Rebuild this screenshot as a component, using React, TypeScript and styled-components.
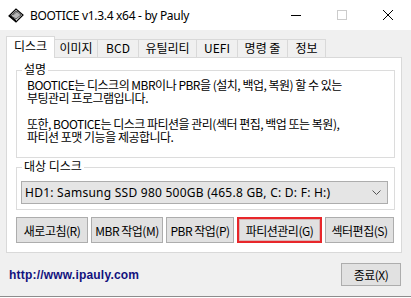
import React from "react";
import styled, { createGlobalStyle } from "styled-components";

const Global = createGlobalStyle`
  html, body { margin: 0; padding: 0; background: #ffffff; }
  body { font-family: "Noto Sans CJK KR", "Noto Sans", sans-serif; color: #000; }
  * { box-sizing: border-box; }
`;

const Window = styled.div`
  width: 411px;
  height: 297px;
  display: flex;
  flex-direction: column;
  background: #f0f0f0;
  border-bottom: 1px solid #8c8c8c;
`;

const TitleBar = styled.div`
  height: 30px;
  flex: 0 0 30px;
  background: #ffffff;
  display: flex;
  align-items: center;
  padding-left: 8px;
`;

const TitleText = styled.div`
  margin-left: 6px;
  font-family: "Noto Sans", "Noto Sans CJK KR", sans-serif;
  font-size: 12px;
  color: #000;
  flex: 1;
  letter-spacing: -0.3px;
`;

const CtrlButton = styled.div`
  width: 46px;
  height: 30px;
  display: flex;
  align-items: center;
  justify-content: center;
`;

const Body = styled.div`
  flex: 1;
  display: flex;
  flex-direction: column;
  padding: 6px 9px 0 6px;
`;

const TabRow = styled.div`
  display: flex;
  align-items: flex-end;
  height: 22px;
  margin-bottom: -1px;
  position: relative;
  z-index: 1;
`;

const Tab = styled.div<{ $w: number; $active?: boolean }>`
  width: ${(p) => p.$w}px;
  height: ${(p) => (p.$active ? 22 : 18)}px;
  margin-bottom: ${(p) => (p.$active ? 0 : 1)}px;
  margin-left: -1px;
  &:first-child { margin-left: 0; }
  border: 1px solid #d9d9d9;
  border-bottom: none;
  background: ${(p) => (p.$active ? "#ffffff" : "#f0f0f0")};
  font-size: 12px;
  line-height: ${(p) => (p.$active ? 18 : 16)}px;
  text-align: center;
  color: #000;
  white-space: nowrap;
  position: relative;
  z-index: ${(p) => (p.$active ? 2 : 1)};
`;

const Panel = styled.div`
  height: 196px;
  border: 1px solid #d9d9d9;
  background: #ffffff;
  padding: 4px 6px 0 9px;
  display: flex;
  flex-direction: column;
`;

const Group = styled.fieldset<{ $h: number; $mt?: number }>`
  margin: ${(p) => p.$mt ?? 0}px 0 0 0;
  padding: 0;
  height: ${(p) => p.$h}px;
  border: 1px solid #dcdcdc;
  min-width: 0;
`;

const Legend = styled.legend`
  margin-left: 5px;
  padding: 0 2px 3px 2px;
  font-size: 12px;
  line-height: 13px;
  color: #000;
`;

const Desc = styled.div`
  padding: 0 10px;
  font-size: 12px;
  line-height: 13px;
  white-space: pre-line;
  letter-spacing: -0.5px;
`;

const Combo = styled.div`
  margin: 6px 6px 0 4px;
  height: 23px;
  border: 1px solid #adadad;
  background: #e5e5e5;
  display: flex;
  align-items: center;
  padding: 0 0 0 3px;
  font-family: "Noto Sans", "Noto Sans CJK KR", sans-serif;
  font-size: 12px;
  color: #000;
`;

const ComboText = styled.div`
  flex: 1;
  white-space: nowrap;
  letter-spacing: 0.25px;
`;

const Chevron = styled.div`
  width: 22px;
  display: flex;
  align-items: center;
  justify-content: center;
`;

const ButtonRow = styled.div`
  display: flex;
  gap: 3px;
  margin-top: 7px;
`;

const Button = styled.div<{ $w: number; $focus?: boolean }>`
  width: ${(p) => p.$w}px;
  height: 26px;
  border: ${(p) => (p.$focus ? "2px solid #e8262a" : "1px solid #adadad")};
  background: #e1e1e1;
  box-shadow: ${(p) => (p.$focus ? "inset 0 0 0 1px #d8b4b4" : "none")};
  display: flex;
  align-items: center;
  justify-content: center;
  font-size: 12px;
  color: #000;
  white-space: nowrap;
  letter-spacing: -0.5px;
`;

const Footer = styled.div`
  flex: 1;
  display: flex;
  align-items: center;
  justify-content: space-between;
  padding: 0 1px 0 3px;
`;

const Link = styled.a`
  font-family: "Liberation Sans", Arial, sans-serif;
  font-weight: bold;
  font-size: 12px;
  letter-spacing: 0.2px;
  color: #12127e;
  text-decoration: none;
`;

const CloseButton = styled(Button)`
  height: 23px;
`;

const AppIcon = () => (
  <svg width="16" height="16" viewBox="0 0 16 16">
    <polygon points="1,9 8,2 15,8 8,15" fill="#e8e8e8" stroke="#000" strokeWidth="1.2" />
    <polygon points="3,9 8,4 13,8 8,12" fill="#b8b8b8" stroke="#333" strokeWidth="0.8" />
    <polygon points="1,9 8,15 8,13 2,8" fill="#000" />
    <line x1="5" y1="8" x2="10" y2="4" stroke="#555" strokeWidth="0.8" />
  </svg>
);

const tabs: { label: string; w: number; active?: boolean }[] = [
  { label: "디스크", w: 49, active: true },
  { label: "이미지", w: 44 },
  { label: "BCD", w: 42 },
  { label: "유틸리티", w: 59 },
  { label: "UEFI", w: 42 },
  { label: "명령 줄", w: 51 },
  { label: "정보", w: 39 },
];

export default function App() {
  return (
    <>
      <Global />
      <Window>
        <TitleBar>
          <AppIcon />
          <TitleText>BOOTICE v1.3.4 x64 - by Pauly</TitleText>
          <CtrlButton>
            <svg width="10" height="10" viewBox="0 0 10 10">
              <line x1="0" y1="5.5" x2="10" y2="5.5" stroke="#000" strokeWidth="1" />
            </svg>
          </CtrlButton>
          <CtrlButton>
            <svg width="10" height="10" viewBox="0 0 10 10">
              <rect x="0.5" y="0.5" width="9" height="9" fill="none" stroke="#cccccc" strokeWidth="1" />
            </svg>
          </CtrlButton>
          <CtrlButton>
            <svg width="10" height="10" viewBox="0 0 10 10">
              <path d="M0 0 L10 10 M10 0 L0 10" stroke="#000" strokeWidth="1" />
            </svg>
          </CtrlButton>
        </TitleBar>
        <Body>
          <TabRow>
            {tabs.map((t) => (
              <Tab key={t.label} $w={t.w} $active={t.active}>
                {t.label}
              </Tab>
            ))}
          </TabRow>
          <Panel>
            <Group $h={96}>
              <Legend>설명</Legend>
              <Desc>
                {"BOOTICE는 디스크의 MBR이나 PBR을 (설치, 백업, 복원) 할 수 있는\n부팅관리 프로그램입니다.\n\n또한, BOOTICE는 디스크 파티션을 관리(섹터 편집, 백업 또는 복원),\n파티션 포맷 기능을 제공합니다."}
              </Desc>
            </Group>
            <Group $h={51} $mt={1}>
              <Legend>대상 디스크</Legend>
              <Combo>
                <ComboText>HD1: Samsung SSD 980 500GB (465.8 GB, C: D: F: H:)</ComboText>
                <Chevron>
                  <svg width="9" height="5" viewBox="0 0 9 5">
                    <path d="M0.5 0.5 L4.5 4.5 L8.5 0.5" fill="none" stroke="#555" strokeWidth="1" />
                  </svg>
                </Chevron>
              </Combo>
            </Group>
            <ButtonRow>
              <Button $w={72}>새로고침(R)</Button>
              <Button $w={72}>MBR 작업(M)</Button>
              <Button $w={68}>PBR 작업(P)</Button>
              <Button $w={85} $focus>파티션관리(G)</Button>
              <Button $w={69}>섹터편집(S)</Button>
            </ButtonRow>
          </Panel>
          <Footer>
            <Link href="#">http://www.ipauly.com</Link>
            <CloseButton $w={60}>종료(X)</CloseButton>
          </Footer>
        </Body>
      </Window>
    </>
  );
}
